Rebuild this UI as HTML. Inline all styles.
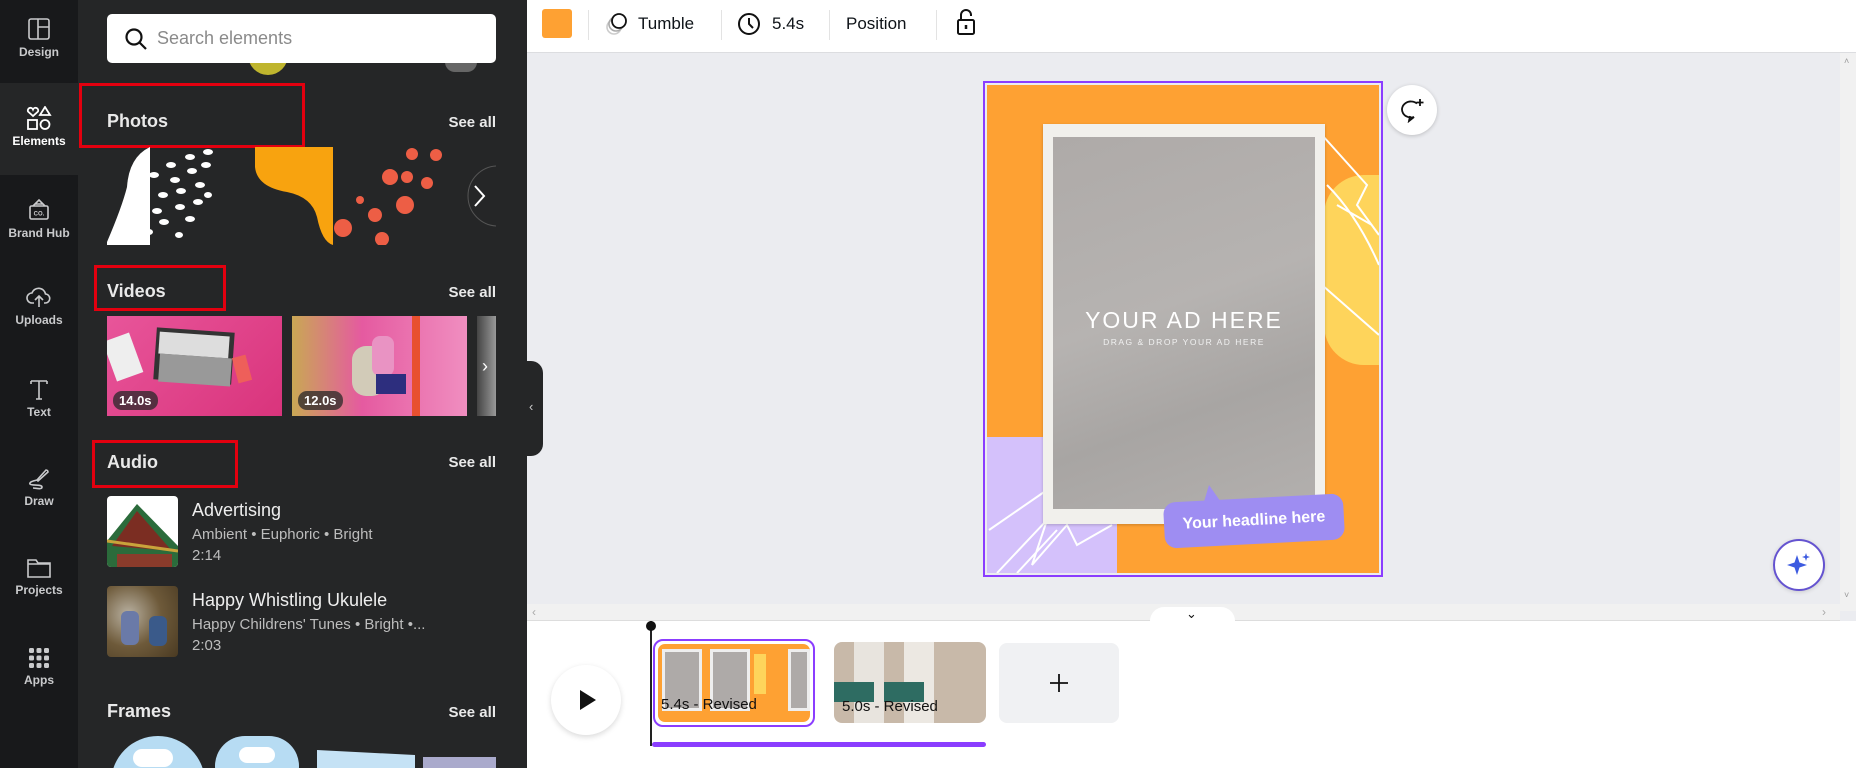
<!DOCTYPE html>
<html style="width:1856px;height:768px;overflow:hidden"><head><meta charset="utf-8"><style>
*{box-sizing:border-box;margin:0;padding:0}
body{width:1856px;height:768px;overflow:hidden;font-family:"Liberation Sans",sans-serif;background:#ebecf0}
#wrap{position:relative;width:1856px;height:768px;overflow:hidden;background:#ebecf0}
.abs{position:absolute}
#rail{left:0;top:0;width:78px;height:768px;background:#18191b}
.ri{position:absolute;left:0;width:78px;text-align:center;color:#c9cacc;font-size:12px;font-weight:bold}
.ri svg{display:block;margin:0 auto 4px}
#panel{left:78px;top:0;width:449px;height:768px;background:#252627;color:#e6e6e6;overflow:hidden}
.h{position:absolute;font-size:18px;font-weight:bold;color:#e9e9e9}
.sa{position:absolute;right:31px;font-size:15px;font-weight:bold;color:#e9e9e9}
.rb{position:absolute;border:3px solid #e3000f}
.t{position:absolute;font-size:18px;color:#eee}
.s{position:absolute;font-size:15px;color:#bdbdbd}
.dur{position:absolute;bottom:6px;left:6px;background:rgba(40,40,40,.75);color:#fff;font-size:13px;font-weight:bold;padding:2px 6px;border-radius:9px}
#top{left:527px;top:0;width:1329px;height:53px;background:#fff;border-bottom:1px solid #dcdde0}
.dv{position:absolute;top:10px;width:1px;height:30px;background:#e3e3e3}
.tt{position:absolute;top:14px;font-size:17px;color:#0e1318}
#tl{left:527px;top:621px;width:1329px;height:147px;background:#fff;overflow:hidden}
</style></head><body><div id="wrap">

<div id="rail" class="abs">
  <div class="abs" style="left:0;top:0;width:78px;height:83px;background:#18191b;border-radius:0 0 12px 0"></div>
  <div class="abs" style="left:0;top:83px;width:78px;height:92px;background:#252627"></div>
  <div class="abs" style="left:0;top:175px;width:78px;height:593px;background:#18191b;border-radius:0 12px 0 0"></div>
  <div class="ri" style="top:17px"><svg width="24" height="24" viewBox="0 0 24 24" fill="none" stroke="#c9cacc" stroke-width="1.6"><rect x="2" y="2" width="20" height="20" rx="2"/><path d="M11 2v20M11 10h11"/></svg>Design</div>
  <div class="ri" style="top:106px;color:#fff"><svg width="26" height="24" viewBox="0 0 26 24" fill="none" stroke="#fff" stroke-width="1.8"><path d="M7 10L2 5.5a2.6 2.6 0 0 1 5-2 2.6 2.6 0 0 1 5 2z"/><path d="M19 1l5 8h-10z"/><rect x="2" y="14" width="9" height="9"/><circle cx="19" cy="18.5" r="4.5"/></svg>Elements</div>
  <div class="ri" style="top:196px"><svg width="26" height="26" viewBox="0 0 26 26" fill="none" stroke="#c9cacc" stroke-width="1.6"><rect x="4" y="10" width="18" height="13" rx="1.5"/><path d="M7 10l6-6 6 6M9 8h8"/><text x="13" y="19.5" font-size="6" fill="#c9cacc" stroke="none" text-anchor="middle" font-family="Liberation Sans">CO.</text></svg>Brand Hub</div>
  <div class="ri" style="top:285px"><svg width="26" height="24" viewBox="0 0 26 24" fill="none" stroke="#c9cacc" stroke-width="1.6"><path d="M8 18H6a5 5 0 0 1 0-10 7 7 0 0 1 13.5 1A4.5 4.5 0 0 1 19 18h-1"/><path d="M13 22V11M9 15l4-4 4 4"/></svg>Uploads</div>
  <div class="ri" style="top:377px"><svg width="24" height="24" viewBox="0 0 24 24" fill="none" stroke="#c9cacc" stroke-width="1.6"><path d="M4 4h16M12 4v18M4 4v3M20 4v3M9 22h6"/></svg>Text</div>
  <div class="ri" style="top:466px"><svg width="24" height="24" viewBox="0 0 24 24" fill="none" stroke="#c9cacc" stroke-width="1.6"><path d="M10 14l9-10a2 2 0 0 1 2 2l-10 9z"/><path d="M10 14c-4 1-8 2-7 4s12 0 12 3-6 1-9 1"/></svg>Draw</div>
  <div class="ri" style="top:557px"><svg width="26" height="22" viewBox="0 0 26 22" fill="none" stroke="#c9cacc" stroke-width="1.6"><path d="M2 3h8l2 3h12v14H2z"/><path d="M2 7h22"/></svg>Projects</div>
  <div class="ri" style="top:647px"><svg width="22" height="22" viewBox="0 0 22 22" fill="#c9cacc"><rect x="1" y="1" width="5" height="5" rx="1.5"/><rect x="8.5" y="1" width="5" height="5" rx="1.5"/><rect x="16" y="1" width="5" height="5" rx="1.5"/><rect x="1" y="8.5" width="5" height="5" rx="1.5"/><rect x="8.5" y="8.5" width="5" height="5" rx="1.5"/><rect x="16" y="8.5" width="5" height="5" rx="1.5"/><rect x="1" y="16" width="5" height="5" rx="1.5"/><rect x="8.5" y="16" width="5" height="5" rx="1.5"/><rect x="16" y="16" width="5" height="5" rx="1.5"/></svg>Apps</div>
</div>

<div id="panel" class="abs">
  <div class="abs" style="left:170px;top:55px;width:40px;height:20px;background:#bfb52e;border-radius:0 0 20px 20px"></div>
  <div class="abs" style="left:367px;top:58px;width:32px;height:14px;background:#666;border-radius:0 0 10px 10px"></div>
  <div class="abs" style="left:29px;top:14px;width:389px;height:49px;background:#fff;border-radius:5px"></div>
  <svg class="abs" style="left:46px;top:27px" width="24" height="24" viewBox="0 0 24 24" fill="none" stroke="#111" stroke-width="2.2"><circle cx="10" cy="10" r="7.5"/><path d="M15.5 15.5L22 22"/></svg>
  <div class="abs" style="left:79px;top:28px;font-size:18px;color:#8a8a8a">Search elements</div>

  <div class="rb" style="left:1px;top:83px;width:226px;height:65px"></div>
  <div class="h" style="left:29px;top:111px">Photos</div><div class="sa" style="top:114px">See all</div>
  <div class="abs" style="left:29px;top:147px;width:389px;height:98px;overflow:hidden">
    <svg width="389" height="98" viewBox="0 0 389 98">
      <path d="M0 98 L0 95 Q15 60 20 40 Q22 10 43 0 L43 98Z" fill="#fff"/>
      <g fill="#fff">
        <ellipse cx="101" cy="5" rx="5" ry="3"/><ellipse cx="83" cy="10" rx="5" ry="3"/><ellipse cx="64" cy="18" rx="5" ry="3"/><ellipse cx="47" cy="28" rx="5" ry="3"/><ellipse cx="68" cy="33" rx="5" ry="3"/><ellipse cx="85" cy="24" rx="5" ry="3"/><ellipse cx="99" cy="18" rx="5" ry="3"/><ellipse cx="56" cy="48" rx="5" ry="3"/><ellipse cx="74" cy="44" rx="5" ry="3"/><ellipse cx="93" cy="38" rx="5" ry="3"/><ellipse cx="30" cy="43" rx="4" ry="3"/><ellipse cx="50" cy="64" rx="5" ry="3"/><ellipse cx="73" cy="60" rx="5" ry="3"/><ellipse cx="91" cy="55" rx="5" ry="3"/><ellipse cx="57" cy="75" rx="5" ry="3"/><ellipse cx="83" cy="72" rx="5" ry="3"/><ellipse cx="101" cy="48" rx="4" ry="3"/><ellipse cx="42" cy="85" rx="4" ry="3"/><ellipse cx="72" cy="88" rx="4" ry="3"/><ellipse cx="37" cy="50" rx="4" ry="3"/>
      </g>
      <path d="M148 0 L226 0 L226 98 Q215 95 210 70 Q205 50 180 45 Q150 40 148 20Z" fill="#f8a30f"/>
      <g fill="#ed5e45"><circle cx="305" cy="7" r="6"/><circle cx="329" cy="8" r="6"/><circle cx="283" cy="30" r="8"/><circle cx="300" cy="30" r="6"/><circle cx="320" cy="36" r="6"/><circle cx="253" cy="53" r="4"/><circle cx="298" cy="58" r="9"/><circle cx="268" cy="68" r="7"/><circle cx="236" cy="81" r="9"/><circle cx="275" cy="92" r="7"/></g>
      <circle cx="391" cy="49" r="30" fill="#252627" stroke="#555" stroke-width="1"/>
      <path d="M368 39 L377 49 L368 59" stroke="#fff" stroke-width="2" fill="none"/>
    </svg>
  </div>

  <div class="rb" style="left:16px;top:265px;width:132px;height:46px"></div>
  <div class="h" style="left:29px;top:281px">Videos</div><div class="sa" style="top:284px">See all</div>
  <div class="abs" style="left:29px;top:316px;width:175px;height:100px;background:linear-gradient(135deg,#e8559a,#d9347c);overflow:hidden">
    <div class="abs" style="left:48px;top:14px;width:78px;height:52px;background:#333;transform:rotate(4deg)"></div>
    <div class="abs" style="left:52px;top:18px;width:70px;height:22px;background:#ddd;transform:rotate(4deg)"></div>
    <div class="abs" style="left:52px;top:40px;width:72px;height:28px;background:#999;transform:rotate(4deg)"></div>
    <div class="abs" style="left:2px;top:20px;width:28px;height:42px;background:#eee;transform:rotate(-20deg)"></div>
    <div class="abs" style="left:128px;top:40px;width:14px;height:26px;background:#ee5f5a;transform:rotate(-15deg)"></div>
    <div class="dur">14.0s</div>
  </div>
  <div class="abs" style="left:214px;top:316px;width:175px;height:100px;background:linear-gradient(90deg,#c9a854,#e55aa0 40%,#f08ec0);overflow:hidden">
    <div class="abs" style="left:60px;top:30px;width:34px;height:50px;background:#d2cbb8;border-radius:14px"></div>
    <div class="abs" style="left:80px;top:20px;width:22px;height:40px;background:#e993c3;border-radius:8px"></div>
    <div class="abs" style="left:84px;top:58px;width:30px;height:20px;background:#2d2e7e"></div>
    <div class="abs" style="left:120px;top:0;width:8px;height:100px;background:#e8502f"></div>
    <div class="dur">12.0s</div>
  </div>
  <div class="abs" style="left:399px;top:316px;width:19px;height:100px;background:linear-gradient(90deg,#444,#999)"></div>
  <div class="abs" style="left:404px;top:356px;color:#fff;font-size:18px">›</div>

  <div class="rb" style="left:14px;top:440px;width:146px;height:48px"></div>
  <div class="h" style="left:29px;top:452px">Audio</div><div class="sa" style="top:454px">See all</div>
  <div class="abs" style="left:29px;top:496px;width:71px;height:71px;background:#fff;border-radius:4px;overflow:hidden">
    <svg width="71" height="71" viewBox="0 0 71 71"><path d="M0 45 L30 8 L71 50 L71 71 L0 71Z" fill="#2b6b3b"/><path d="M5 50 L30 15 L65 55 Z" fill="#7b2d22"/><rect x="10" y="58" width="55" height="13" fill="#8a3b2b"/><path d="M0 45 L71 55" stroke="#c9a33b" stroke-width="3"/></svg>
  </div>
  <div class="t" style="left:114px;top:500px">Advertising</div>
  <div class="s" style="left:114px;top:526px">Ambient • Euphoric • Bright</div>
  <div class="s" style="left:114px;top:547px">2:14</div>
  <div class="abs" style="left:29px;top:586px;width:71px;height:71px;border-radius:4px;background:radial-gradient(circle at 30% 40%,#b8b0a0,#6e5a3a 50%,#4a3a22);overflow:hidden">
    <div class="abs" style="left:14px;top:25px;width:18px;height:34px;background:#6a7aa8;border-radius:6px"></div>
    <div class="abs" style="left:42px;top:30px;width:18px;height:30px;background:#3a5a8a;border-radius:6px"></div>
  </div>
  <div class="t" style="left:114px;top:590px">Happy Whistling Ukulele</div>
  <div class="s" style="left:114px;top:616px">Happy Childrens' Tunes • Bright •...</div>
  <div class="s" style="left:114px;top:637px">2:03</div>

  <div class="h" style="left:29px;top:701px">Frames</div><div class="sa" style="top:704px">See all</div>
  <div class="abs" style="left:29px;top:735px;width:389px;height:33px;overflow:hidden">
    <svg width="389" height="33" viewBox="0 0 389 33">
      <circle cx="51" cy="48" r="47" fill="#b7dcf3"/>
      <rect x="26" y="14" width="40" height="18" rx="9" fill="#fff"/>
      <rect x="108" y="1" width="84" height="60" rx="30" fill="#b7dcf3"/>
      <rect x="132" y="12" width="36" height="16" rx="8" fill="#fff"/>
      <path d="M210 15 L308 20 L308 40 L210 40Z" fill="#c5e2f5"/>
      <rect x="316" y="22" width="73" height="20" fill="#aac"/>
    </svg>
  </div>
</div>

<div class="abs" style="left:527px;top:361px;width:16px;height:95px;background:#252627;border-radius:0 12px 12px 0"></div>
<div class="abs" style="left:529px;top:399px;color:#ccc;font-size:13px">‹</div>

<div id="top" class="abs">
  <div class="abs" style="left:15px;top:9px;width:30px;height:29px;background:#fea133;border-radius:3px"></div>
  <div class="dv" style="left:61px"></div>
  <svg class="abs" style="left:78px;top:11px" width="26" height="26" viewBox="0 0 26 26" fill="none"><circle cx="9" cy="16" r="7" stroke="#ccc" stroke-width="1.6"/><circle cx="11" cy="13" r="7" stroke="#aaa" stroke-width="1.6"/><circle cx="14" cy="10" r="7" stroke="#111" stroke-width="1.8" fill="#fff"/></svg>
  <div class="tt" style="left:111px">Tumble</div>
  <div class="dv" style="left:194px"></div>
  <svg class="abs" style="left:210px;top:12px" width="24" height="24" viewBox="0 0 24 24" fill="none" stroke="#111" stroke-width="2"><circle cx="12" cy="12" r="10"/><path d="M12 6v6l4 4"/></svg>
  <div class="tt" style="left:245px">5.4s</div>
  <div class="dv" style="left:302px"></div>
  <div class="tt" style="left:319px">Position</div>
  <div class="dv" style="left:409px"></div>
  <svg class="abs" style="left:429px;top:8px" width="20" height="28" viewBox="0 0 20 28" fill="none" stroke="#111" stroke-width="2"><rect x="2" y="12" width="16" height="14" rx="1.5"/><path d="M5 12V7a5 5 0 0 1 10 0v1"/><path d="M10 17v4" stroke-width="2.5"/></svg>
</div>

<div class="abs" style="left:983px;top:81px;width:400px;height:496px;border:2px solid #8b3dff;padding:2px;background:#ebecf0">
  <div style="position:relative;width:392px;height:488px;background:#fea133;overflow:hidden">
    <div class="abs" style="left:337px;top:90px;width:70px;height:190px;background:#fed45b;border-radius:40px 0 0 40px"></div>
    <svg class="abs" style="left:330px;top:40px" width="62" height="240" viewBox="0 0 62 240" fill="none" stroke="#fff" stroke-width="2"><path d="M5 10 L50 60 L40 80 L62 110 M10 60 Q40 90 62 140 M5 160 L62 210 M20 80 L55 100"/></svg>
    <div class="abs" style="left:0;top:352px;width:130px;height:136px;background:#d4c1fb;border-radius:0 60px 0 0"></div>
    <svg class="abs" style="left:0;top:400px" width="130" height="88" viewBox="0 0 130 88" fill="none" stroke="#fff" stroke-width="2"><path d="M2 45 L60 5 M10 88 L60 35 L45 80 L80 40 L90 60 L125 40 M30 88 L70 45"/></svg>
    <div class="abs" style="left:56px;top:39px;width:282px;height:400px;background:#f1f0ec;box-shadow:0 1px 3px rgba(0,0,0,.2)"></div>
    <div class="abs" style="left:66px;top:52px;width:262px;height:372px;background:linear-gradient(160deg,#aeaaa8 0%,#b6b3b1 45%,#a8a5a3 70%,#b3b0ae 100%)"></div>
    <div class="abs" style="left:56px;top:222px;width:282px;text-align:center;color:#fff;font-size:23px;letter-spacing:2px">YOUR AD HERE</div>
    <div class="abs" style="left:56px;top:252px;width:282px;text-align:center;color:#f0f0f0;font-size:8.5px;letter-spacing:1.5px">DRAG &amp; DROP YOUR AD HERE</div>
    <div class="abs" style="left:216px;top:400px;width:0;height:0;border-left:6px solid transparent;border-right:14px solid transparent;border-bottom:20px solid #9e8df2"></div>
    <div class="abs" style="left:177px;top:413px;width:180px;height:46px;background:#9e8df2;border-radius:12px;transform:rotate(-3deg);color:#fff;font-size:16px;font-weight:bold;text-align:center;line-height:46px">Your headline here</div>
  </div>
</div>

<div class="abs" style="left:1387px;top:85px;width:50px;height:50px;border-radius:50%;background:#fff;box-shadow:0 1px 4px rgba(0,0,0,.2)"></div>
<svg class="abs" style="left:1400px;top:97px" width="26" height="26" viewBox="0 0 26 26" fill="none" stroke="#111" stroke-width="1.8"><path d="M17 6.5A9 8 0 1 0 14 20l-5 4 1-5"/><path d="M20 2v7M16.5 5.5h7"/></svg>
<div class="abs" style="left:1773px;top:539px;width:52px;height:52px;border-radius:50%;background:#fff;border:2px solid #6453d0;box-shadow:0 1px 4px rgba(0,0,0,.15)"></div>
<svg class="abs" style="left:1786px;top:552px" width="26" height="26" viewBox="0 0 26 26" fill="#3d5be0"><path d="M11 3 L13.5 10.5 L21 13 L13.5 15.5 L11 23 L8.5 15.5 L1 13 L8.5 10.5Z"/><path d="M20 1 L21 4 L24 5 L21 6 L20 9 L19 6 L16 5 L19 4Z"/></svg>

<div class="abs" style="left:1840px;top:53px;width:16px;height:558px;background:#f1f1f1"></div>
<div class="abs" style="left:1844px;top:56px;font-size:9px;color:#999">˄</div>
<div class="abs" style="left:1844px;top:590px;font-size:9px;color:#999">˅</div>
<div class="abs" style="left:527px;top:604px;width:1313px;height:17px;background:#f1f1f1;border-bottom:1px solid #ddd"></div>
<div class="abs" style="left:532px;top:605px;font-size:12px;color:#aaa">‹</div>
<div class="abs" style="left:1822px;top:605px;font-size:12px;color:#aaa">›</div>
<div class="abs" style="left:1150px;top:607px;width:85px;height:14px;background:#fff;border-radius:14px 14px 0 0"></div>
<div class="abs" style="left:1186px;top:606px;font-size:13px;color:#111">⌄</div>

<div id="tl" class="abs">
  <div class="abs" style="left:24px;top:44px;width:70px;height:70px;border-radius:50%;background:#fff;box-shadow:0 2px 6px rgba(0,0,0,.15)"></div>
  <svg class="abs" style="left:51px;top:67px" width="20" height="24" viewBox="0 0 20 24"><path d="M2 2 L18 12 L2 22Z" fill="#111"/></svg>
  <div class="abs" style="left:123px;top:0;width:2px;height:125px;background:#222"></div>
  <div class="abs" style="left:119px;top:0;width:10px;height:10px;background:#111;border-radius:50%"></div>
  <div class="abs" style="left:126px;top:18px;width:162px;height:88px;border:2px solid #8b3dff;border-radius:10px;padding:3px">
    <div style="position:relative;width:100%;height:100%;background:#fea133;border-radius:7px;overflow:hidden">
      <div class="abs" style="left:4px;top:5px;width:40px;height:62px;background:#aeaaa8;border:3px solid #eee"></div>
      <div class="abs" style="left:52px;top:5px;width:40px;height:62px;background:#aeaaa8;border:3px solid #eee"></div>
      <div class="abs" style="left:96px;top:10px;width:12px;height:40px;background:#fed45b"></div>
      <div class="abs" style="left:130px;top:5px;width:22px;height:62px;background:#aeaaa8;border:3px solid #eee"></div>
      <div class="abs" style="left:3px;top:52px;font-size:15px;color:#111">5.4s - Revised</div>
    </div>
  </div>
  <div class="abs" style="left:307px;top:21px;width:152px;height:81px;background:#c8b9a9;border-radius:8px;overflow:hidden">
    <div class="abs" style="left:20px;top:0;width:30px;height:81px;background:#e8e4de"></div>
    <div class="abs" style="left:70px;top:0;width:30px;height:81px;background:#ece8e2"></div>
    <div class="abs" style="left:0;top:40px;width:40px;height:20px;background:#2e6c62"></div>
    <div class="abs" style="left:50px;top:40px;width:40px;height:20px;background:#2e6c62"></div>
    <div class="abs" style="left:8px;top:56px;font-size:15px;color:#111">5.0s - Revised</div>
  </div>
  <div class="abs" style="left:472px;top:22px;width:120px;height:80px;background:#f0f1f3;border-radius:8px"></div>
  <svg class="abs" style="left:522px;top:52px" width="20" height="20" viewBox="0 0 20 20" stroke="#111" stroke-width="1.8"><path d="M10 1v18M1 10h18"/></svg>
  <div class="abs" style="left:125px;top:121px;width:334px;height:5px;background:#8b3dff;border-radius:3px"></div>
</div>
</div></body></html>
